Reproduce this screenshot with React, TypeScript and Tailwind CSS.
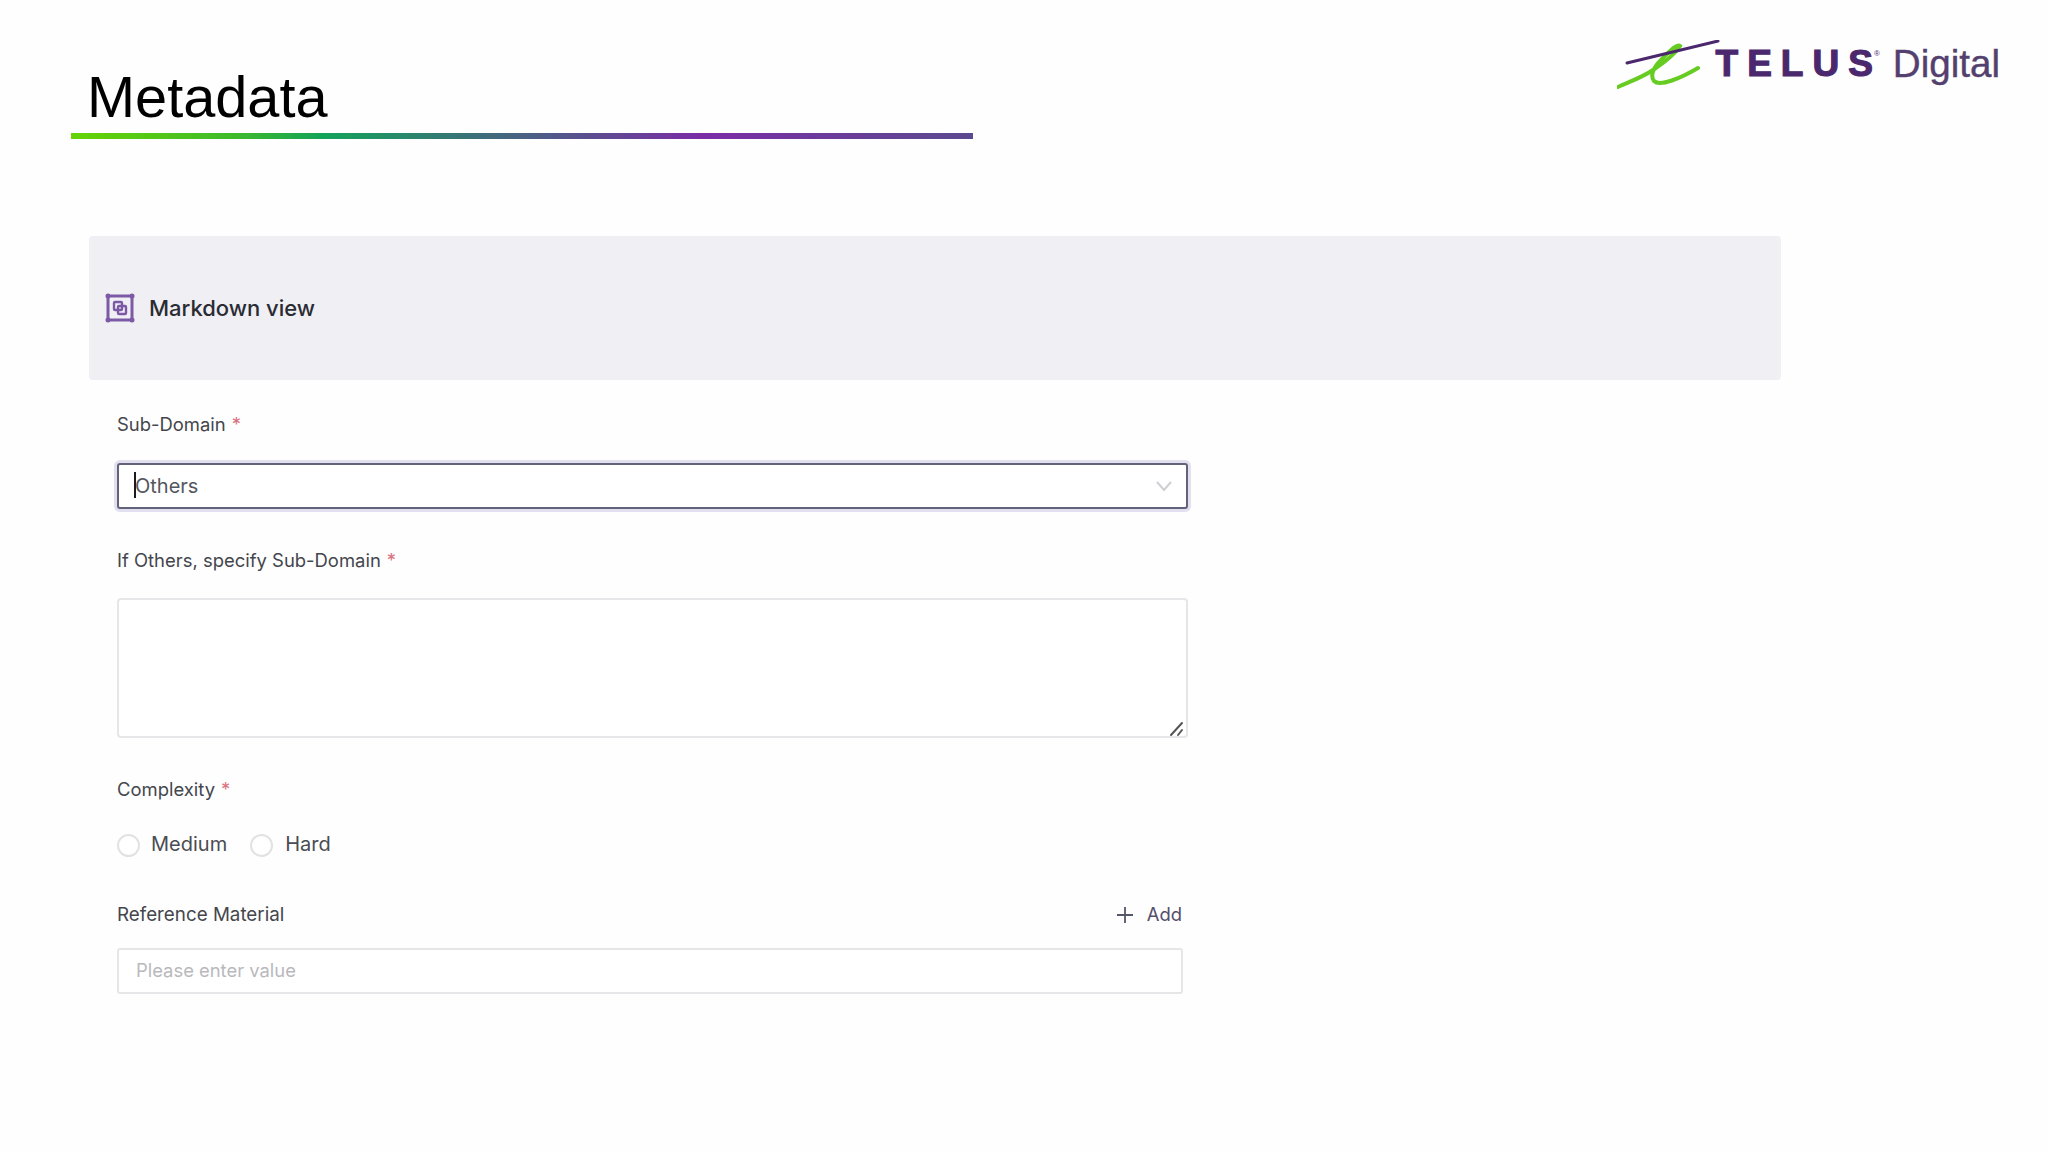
import React from "react";

const Star = () => <span className="text-[#d9737f] ml-[6px]">*</span>;

function Logo() {
  return (
    <div className="flex items-center h-[50px] mt-[40px] mr-[48px] font-['Liberation_Sans',sans-serif]">
      <svg width="105" height="50" viewBox="0 0 105 50" fill="none" className="-mr-[6px]">
        <path d="M1 47 C14 41 26 37 36 30 C48 22 58 14 63 6 C60 3 52 12 44 20 C36 28 33 36 37 41 C43 47 64 38 81 28" stroke="#66cc22" strokeWidth="4" strokeLinecap="round" />
        <path d="M10 23 L101 1" stroke="#4b286d" strokeWidth="3" strokeLinecap="round" />
      </svg>
      <span className="text-[37px] font-bold text-[#4b286d] tracking-[9px] leading-none mb-[4px] [-webkit-text-stroke:1.2px_#4b286d]">
        TELU<span className="tracking-normal">S</span>
      </span>
      <span className="text-[8px] text-[#4b286d] ml-[1px] mb-[22px] mr-[13px]">®</span>
      <span className="text-[38.6px] text-[#54406f] leading-none mb-[2px] [-webkit-text-stroke:0.4px_#54406f]">Digital</span>
    </div>
  );
}

export default function App() {
  return (
    <div className="w-[2048px] h-[1152px] bg-[#fefefe] overflow-hidden font-['Inter',sans-serif]">
      <header className="flex justify-between h-[236px]">
        <div className="pl-[71px] pt-[62px]">
          <h1 className="pl-[16px] text-[57.7px] leading-[70px] text-black font-['Liberation_Sans',sans-serif]">Metadata</h1>
          <div className="mt-[1px] w-[902px] h-[6px] bg-[linear-gradient(to_right,#66d406_0%,#3fbb2a_18%,#12a35a_28%,#3d6f7a_45%,#7a2da6_70%,#5b4a8f_100%)]" />
        </div>
        <Logo />
      </header>

      <div className="ml-[89px] w-[1692px] h-[144px] bg-[#f0eff4] rounded-[4px] flex items-center pl-[16px] gap-[14px]">
        <svg width="30" height="30" viewBox="0 0 30 30" fill="none" stroke="#7c5aa6">
          <rect x="3" y="3" width="24" height="24" strokeWidth="3" />
          <g fill="#7c5aa6" stroke="none">
            <circle cx="3" cy="3" r="2.5" />
            <circle cx="27" cy="3" r="2.5" />
            <circle cx="3" cy="27" r="2.5" />
            <circle cx="27" cy="27" r="2.5" />
          </g>
          <rect x="9" y="9" width="8" height="8" rx="1" strokeWidth="2.4" />
          <rect x="13" y="13" width="8" height="8" rx="1" strokeWidth="2.4" />
        </svg>
        <span className="text-[22px] font-medium text-[#2a2c33]">Markdown view</span>
      </div>

      <main className="pl-[117px] text-[18.45px] text-[#44464d]">
        <div className="w-[1071px]">
          <label className="block mt-[32px] leading-[24px]">Sub-Domain<Star /></label>
          <div className="relative mt-[27px] h-[46px] bg-white border-2 border-[#62637a] rounded-[3px] shadow-[0_0_0_3px_#e2dff0] flex items-center pl-[16px] pr-[14px] justify-between text-[20px] text-[#54565e]">
            <span className="relative">
              <span className="absolute -left-[1px] top-[1px] w-[2px] h-[26px] bg-[#1b1b1f]" />
              Others
            </span>
            <svg width="16" height="11" viewBox="0 0 16 11" fill="none" stroke="#cfcfd3" strokeWidth="2"><path d="M1 1 L8 9 L15 1" /></svg>
          </div>

          <label className="block mt-[39px] leading-[24px]">If Others, specify Sub-Domain<Star /></label>
          <div className="relative mt-[26px] h-[140px] border-2 border-[#e6e6e8] rounded-[4px] bg-white">
            <svg width="16" height="16" viewBox="0 0 16 16" className="absolute right-[1px] -bottom-[1px]" stroke="#555" strokeWidth="2" strokeLinecap="round">
              <path d="M2 14 L13 2" />
              <path d="M9 14 L13 9" />
            </svg>
          </div>

          <label className="block mt-[39px] leading-[24px]">Complexity<Star /></label>
          <div className="flex items-center mt-[29px] h-[28px] text-[20px] text-[#4a4c53]">
            <span className="w-[23px] h-[23px] rounded-full border-2 border-[#e2e2e4] bg-white mt-[2px]" />
            <span className="ml-[11px]">Medium</span>
            <span className="w-[23px] h-[23px] rounded-full border-2 border-[#e2e2e4] bg-white ml-[23px] mt-[2px]" />
            <span className="ml-[12px]">Hard</span>
          </div>

          <div className="flex items-center justify-between mt-[43px] h-[28px]">
            <span className="text-[18.8px]">Reference Material</span>
            <span className="flex items-center gap-[13px] pr-[6px] text-[#54506b]">
              <svg width="18" height="18" viewBox="0 0 18 18" stroke="#54566a" strokeWidth="1.8"><path d="M9 1 V17 M1 9 H17" /></svg>
              Add
            </span>
          </div>
          <div className="mt-[19px] w-[1066px] h-[46px] border-2 border-[#e6e6e8] rounded-[3px] bg-white flex items-center pl-[17px] text-[18.4px] text-[#b9b9bd]">
            Please enter value
          </div>
        </div>
      </main>
    </div>
  );
}
